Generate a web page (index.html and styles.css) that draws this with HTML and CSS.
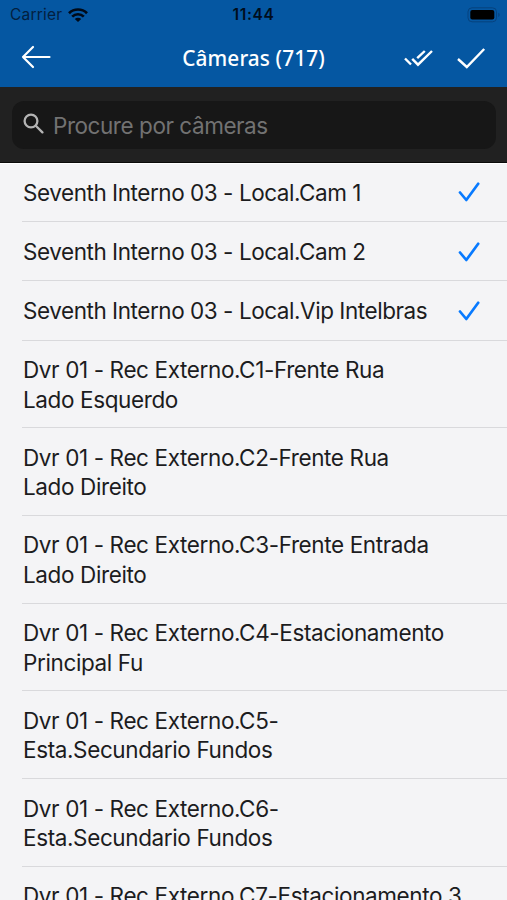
FILE: index.html
```html
<!DOCTYPE html>
<html lang="pt-BR">
<head>
<meta charset="utf-8">
<title>Câmeras</title>
<link rel="stylesheet" href="styles.css">
</head>
<body>
<header class="top">
  <div class="status">
    <div class="carrier"><span>Carrier</span>
      <svg class="wifi" width="20" height="14" viewBox="0 0 20 14" fill="none" stroke="#000a18" stroke-width="2.7"><path d="M1 5.2a12.8 12.8 0 0 1 18 0M4.2 8.6a8.3 8.3 0 0 1 11.6 0"/><path d="M6.8 11.1a4.5 4.5 0 0 1 6.4 0L10 14z" fill="#000a18" stroke="none"/></svg>
    </div>
    <time class="clock">11:44</time>
    <svg class="battery" width="34" height="16" viewBox="0 0 34 16"><rect x="1" y=".8" width="28.5" height="14" rx="4" fill="none" stroke="#06427e"/><rect x="3.3" y="3" width="24" height="9.6" rx="2" fill="#000"/><path d="M31.3 5.7c1.8.7 1.8 3.5 0 4.2z" fill="#06427e"/></svg>
  </div>
  <nav class="bar">
    <svg class="back" width="30" height="24" viewBox="0 0 30 24"><path d="M12 2 2 12l10 10M2 12h26.5"/></svg>
    <h1 class="title">Câmeras (717)</h1>
    <div class="actions">
      <svg class="all" width="30" height="18" viewBox="0 0 30 18"><path d="m2 9.5 6 6M9.2 9.8l5.8 5.9L29 2M14.2 9.2 21.8 2"/></svg>
      <svg class="done" width="30" height="22" viewBox="0 0 30 22"><path d="m2 12 8.8 8L28.2 2"/></svg>
    </div>
  </nav>
</header>
<div class="search">
  <div class="field">
    <svg width="21" height="21" viewBox="0 0 21 21"><circle cx="8" cy="8" r="6.4"/><path d="m12.8 12.8 6.6 6.6"/></svg>
    <span class="hint">Procure por câmeras</span>
  </div>
</div>
<ul class="list">
  <li class="row single"><span>Seventh Interno 03 - Local.Cam 1</span><svg class="tick" width="22" height="21" viewBox="0 0 22 21"><path d="m2 10.5 6.3 7.5L20.2 1.8"/></svg></li>
  <li class="row single"><span>Seventh Interno 03 - Local.Cam 2</span><svg class="tick" width="22" height="21" viewBox="0 0 22 21"><path d="m2 10.5 6.3 7.5L20.2 1.8"/></svg></li>
  <li class="row single"><span>Seventh Interno 03 - Local.Vip Intelbras</span><svg class="tick" width="22" height="21" viewBox="0 0 22 21"><path d="m2 10.5 6.3 7.5L20.2 1.8"/></svg></li>
  <li class="row double"><span>Dvr 01 - Rec Externo.C1-Frente Rua<br>Lado Esquerdo</span></li>
  <li class="row double"><span>Dvr 01 - Rec Externo.C2-Frente Rua<br>Lado Direito</span></li>
  <li class="row double"><span>Dvr 01 - Rec Externo.C3-Frente Entrada<br>Lado Direito</span></li>
  <li class="row double"><span>Dvr 01 - Rec Externo.C4-Estacionamento<br>Principal Fu</span></li>
  <li class="row double"><span>Dvr 01 - Rec Externo.C5-<br>Esta.Secundario Fundos</span></li>
  <li class="row double"><span>Dvr 01 - Rec Externo.C6-<br>Esta.Secundario Fundos</span></li>
  <li class="row double"><span>Dvr 01 - Rec Externo.C7-Estacionamento 3</span></li>
</ul>
</body>
</html>
```
FILE: styles.css
```css
* { box-sizing: border-box; }
body {
  margin: 0;
  height: 900px;
  overflow: hidden;
  background: #f4f4f6;
  font-family: Inter, "Liberation Sans", sans-serif;
  color: #1c1c1e;
}
svg { display: block; flex: none; }
.top { height: 87px; background: #0557a2; }
.status {
  display: grid;
  grid-template-columns: 1fr auto 1fr;
  align-items: center;
  height: 29px;
  padding: 0 6px 0 10px;
  font-size: 15.5px;
  line-height: 20px;
  color: #03203f;
}
.carrier { display: flex; align-items: center; gap: 6px; letter-spacing: .2px; }
.carrier span { padding-top: 1px; }
.clock { padding: 1px 4px 0 0; font-weight: 600; color: #000d1c; letter-spacing: .7px; }
.battery { justify-self: end; }
.bar {
  display: grid;
  grid-template-columns: 1fr auto 1fr;
  align-items: center;
  height: 56px;
  padding: 0 21px 0 21px;
}
.bar path { fill: none; stroke: #fff; stroke-width: 2.2; stroke-linecap: round; stroke-linejoin: round; }
.bar .actions path { stroke-linecap: butt; stroke-linejoin: miter; stroke-width: 2.4; }
.title {
  margin: 1px 0 0;
  font: 500 20.8px/28px "Noto Sans", sans-serif;
  letter-spacing: .1px;
  color: #fff;
}
.actions { display: flex; align-items: center; justify-content: flex-end; gap: 23px; padding-top: 1px; }
.search {
  height: 76px;
  padding: 14px 11px 12px 12px;
  background: #212121;
  border-bottom: 1px solid #0a0a0a;
}
.field {
  display: flex;
  align-items: center;
  gap: 9px;
  height: 48px;
  padding-left: 11px;
  border-radius: 12px;
  background: #171717;
}
.field svg { margin-top: -4px; fill: none; stroke: #b4b4b4; stroke-width: 2.3; stroke-linecap: round; }
.hint { font-size: 22.5px; letter-spacing: -.45px; color: #727272; }
.list { list-style: none; margin: 0; padding: 0 0 0 22px; box-shadow: inset 0 1px #fff; }
.row {
  display: flex;
  align-items: center;
  justify-content: space-between;
  height: 59.2px;
  padding: 0 27px 0 1px;
  border-bottom: 1px solid #d9d9dc;
  font-size: 22.5px;
  line-height: 29.6px;
  letter-spacing: -.45px;
  white-space: nowrap;
}
.single { padding-top: 1.6px; }
.double { height: 87.7px; align-items: flex-start; padding-top: 14.5px; letter-spacing: -.38px; }
.tick { fill: none; stroke: #087aff; stroke-width: 2.7; stroke-linecap: round; stroke-linejoin: round; }
```
